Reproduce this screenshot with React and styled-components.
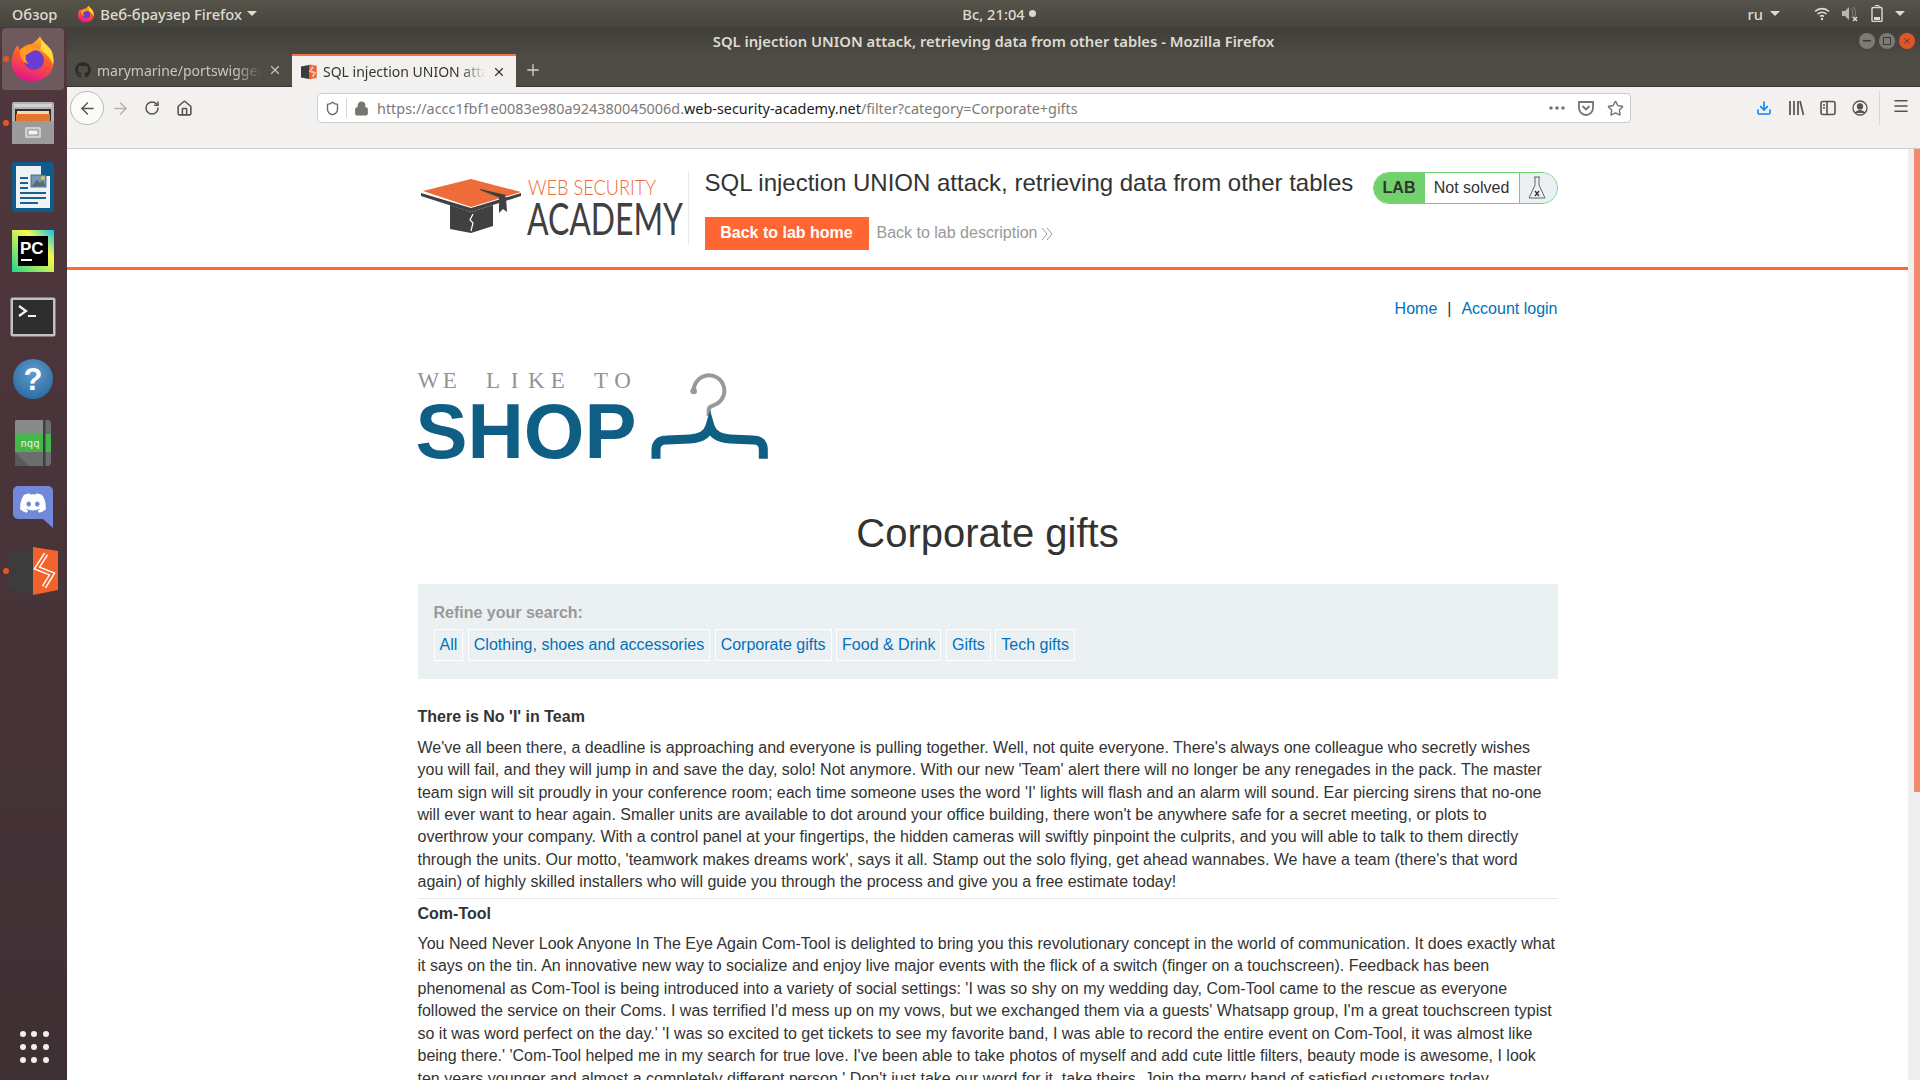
import React from 'react'
import styled, { createGlobalStyle } from 'styled-components'
import { ArrowLeft, ArrowRight, RotateCw, House, Lock, Star, Download, Menu, Plus, X, Shield } from 'lucide-react'
import { FaGithub, FaDiscord } from 'react-icons/fa'

const GlobalStyle = createGlobalStyle`
    html, body {
        margin: 0;
        height: 100%;
        overflow: hidden;
        background: #fff;
    }
    * { box-sizing: border-box; }
`

const Screen = styled.div`
    width: 1920px;
    height: 1080px;
    display: flex;
    flex-direction: column;
    overflow: hidden;
    font-family: 'Liberation Sans', Arial, sans-serif;
`

/* ---- gnome top bar ---- */
const TopBar = styled.div`
    height: 27px;
    flex: none;
    display: grid;
    grid-template-columns: 1fr auto 1fr;
    align-items: center;
    background: linear-gradient(#565349, #46443e);
    color: #dedbd2;
    font-family: 'Noto Sans', sans-serif;
    font-size: 14.7px;
    font-weight: 500;
    padding: 0 12px;
`
const BarGroup = styled.div`
    display: flex;
    align-items: center;
    gap: ${(props) => props.gap || 0}px;
    justify-content: ${(props) => props.end ? 'flex-end' : 'flex-start'};
`
const Caret = styled.span`
    width: 0;
    height: 0;
    border-left: 5px solid transparent;
    border-right: 5px solid transparent;
    border-top: 5px solid #dedbd2;
    margin-left: ${(props) => props.left || 0}px;
    margin-right: ${(props) => props.right || 0}px;
`
const Clock = styled.div`
    display: flex;
    align-items: center;
    gap: 4px;
    margin-left: 78px;
    &::after {
        content: '';
        width: 7px;
        height: 7px;
        border-radius: 50%;
        background: #d8d6d0;
    }
`

const Desktop = styled.div`
    flex: 1;
    min-height: 0;
    display: flex;
`

/* ---- ubuntu dock ---- */
const Dock = styled.div`
    width: 67px;
    flex: none;
    display: flex;
    flex-direction: column;
    background: linear-gradient(#50373d, #3f3034);
`
const DockItem = styled.div`
    position: relative;
    height: 64px;
    display: flex;
    align-items: center;
    justify-content: center;
    padding-right: 1px;
    padding-top: ${(props) => props.lower ? 4 : 0}px;
    &::before {
        content: ${(props) => props.running ? "''" : 'none'};
        position: absolute;
        left: 3px;
        top: 29px;
        width: 6px;
        height: 6px;
        border-radius: 50%;
        background: #e95420;
    }
`
const ActiveTile = styled.div`
    width: 62px;
    height: 62px;
    border-radius: 4px;
    background: #6e5a5e;
    display: flex;
    align-items: center;
    justify-content: center;
`
const AppGrid = styled.div`
    margin-top: auto;
    margin-bottom: 17px;
    align-self: center;
    display: grid;
    grid-template-columns: repeat(3, 5px);
    gap: 7px 6.5px;
    span {
        width: 6px;
        height: 6px;
        border-radius: 50%;
        background: #f2f0ee;
    }
`

/* ---- firefox window ---- */
const Browser = styled.div`
    flex: 1;
    min-width: 0;
    display: flex;
    flex-direction: column;
`
const TitleBar = styled.div`
    height: 27px;
    flex: none;
    position: relative;
    display: flex;
    align-items: center;
    justify-content: center;
    background: linear-gradient(#403e39, #4b4942);
    color: #dedbd2;
    font-family: 'Noto Sans', sans-serif;
    font-size: 14.8px;
    font-weight: 600;
`
const WindowButtons = styled.div`
    position: absolute;
    right: 5px;
    top: 6px;
    display: flex;
    gap: 4px;
`
const WindowButton = styled.div`
    width: 16px;
    height: 16px;
    border-radius: 50%;
    background: ${(props) => props.close ? '#e0562a' : '#7c7a74'};
    display: flex;
    align-items: center;
    justify-content: center;
    color: #3d3b37;
`
const TabStrip = styled.div`
    height: 33px;
    flex: none;
    display: flex;
    align-items: stretch;
    padding-left: 8px;
    background: #4f4c45;
    border-bottom: 1px solid #36352f;
`
const Tab = styled.div`
    width: ${(props) => props.active ? 224 : 217}px;
    display: flex;
    align-items: center;
    gap: 6px;
    padding: 0 10px 0 ${(props) => props.active ? 9 : 0}px;
    margin-bottom: ${(props) => props.active ? -1 : 0}px;
    background: ${(props) => props.active ? '#f2f1ef' : 'transparent'};
    border-top: ${(props) => props.active ? '2px solid #f0734a' : 'none'};
    color: ${(props) => props.active ? '#36352f' : '#c9c6bf'};
    font-family: 'Noto Sans', sans-serif;
    font-size: 14px;
`
const TabLabel = styled.span`
    flex: 1;
    min-width: 0;
    white-space: nowrap;
    overflow: hidden;
    -webkit-mask-image: linear-gradient(to right, #000 84%, transparent);
    mask-image: linear-gradient(to right, #000 84%, transparent);
`
const NewTab = styled.div`
    width: 34px;
    display: flex;
    align-items: center;
    justify-content: center;
    color: #d5d2cb;
`
const Toolbar = styled.div`
    height: 62px;
    flex: none;
    display: flex;
    align-items: flex-start;
    padding: 4px 0 0 3px;
    background: #f2f1ef;
    border-bottom: 1px solid #cfcdca;
    color: #55534f;
`
const BackButton = styled.div`
    width: 34px;
    height: 34px;
    border-radius: 50%;
    background: #fbfbfa;
    border: 1px solid #bdbbb8;
    display: flex;
    align-items: center;
    justify-content: center;
`
const NavButton = styled.div`
    width: 32px;
    height: 34px;
    display: flex;
    align-items: center;
    justify-content: center;
    color: ${(props) => props.dim ? '#b4b2ae' : 'inherit'};
`
const UrlBar = styled.div`
    width: 1314px;
    height: 30px;
    margin: 2px 0 0 117px;
    display: flex;
    align-items: center;
    background: #fff;
    border: 1px solid #cdcbc8;
    border-radius: 4px;
    font-family: 'Noto Sans', sans-serif;
    font-size: 14.4px;
    color: #7c7a76;
`
const UrlShield = styled.div`
    width: 29px;
    height: 20px;
    display: flex;
    align-items: center;
    justify-content: center;
    border-right: 1px solid #d8d6d3;
    margin-right: 7px;
`
const UrlText = styled.div`
    flex: 1;
    margin-left: 8px;
    white-space: nowrap;
    b {
        font-weight: 400;
        color: #1c1b1a;
    }
`
const UrlActions = styled.div`
    display: flex;
    align-items: center;
    gap: 13px;
    padding-right: 6px;
    color: #77756f;
`
const ToolIcons = styled.div`
    display: flex;
    align-items: center;
    height: 34px;
    margin-left: 125px;
    gap: 16px;
`
const ToolDivider = styled.div`
    width: 1px;
    height: 34px;
    background: #d8d6d3;
    margin-left: -5px;
`
const MenuButton = styled.div`
    margin: 6px 0 0 12px;
    display: flex;
`

/* ---- page in the browser ---- */
const Viewport = styled.div`
    flex: 1;
    min-height: 0;
    display: flex;
    background: #fff;
`
const Page = styled.div`
    flex: 1;
    min-width: 0;
    overflow: hidden;
    color: #333332;
    font-size: 16px;
    line-height: 22.4px;
`
const Scrollbar = styled.div`
    width: 12px;
    flex: none;
    display: flex;
    justify-content: flex-end;
    background: #f0efee;
`
const ScrollThumb = styled.div`
    width: 6px;
    height: 643px;
    background: #f2896a;
`
const LabHeader = styled.div`
    height: 121px;
    border-bottom: 3px solid #ff6633;
`
const Container = styled.div`
    width: 1140px;
    margin: 0 auto;
`
const HeaderInner = styled(Container)`
    display: flex;
    align-items: flex-start;
    padding-top: 22px;
`
const LogoBlock = styled.div`
    width: 271px;
    height: 73px;
    flex: none;
    padding: 7px 0 0 2px;
    border-right: 1px solid #e6e8e9;
`
const TitleColumn = styled.div`
    margin: -3px 0 0 16px;
`
const LabTitle = styled.h2`
    margin: 0 0 20px;
    font-size: 24px;
    line-height: 29px;
    font-weight: 400;
    white-space: nowrap;
`
const LabLinks = styled.div`
    display: flex;
    align-items: center;
`
const LabButton = styled.a`
    width: 164px;
    height: 33px;
    display: flex;
    align-items: center;
    justify-content: center;
    background: #ff6633;
    color: #fff;
    font-weight: 700;
`
const LabLink = styled.a`
    display: flex;
    align-items: center;
    gap: 4px;
    margin-left: 8px;
    color: #999;
`
const StatusWidget = styled.div`
    margin: 1px 0 0 auto;
    width: 185px;
    height: 32px;
    display: flex;
    overflow: hidden;
    border: 1px solid #70d16d;
    border-radius: 16px;
    line-height: 30px;
`
const StatusTag = styled.div`
    width: 51px;
    background: #70d16d;
    font-weight: 700;
    text-align: center;
`
const StatusText = styled.div`
    width: 95px;
    text-align: center;
    border-right: 1px solid #70d16d;
`
const StatusIcon = styled.div`
    flex: 1;
    background: #ebf0f2;
    display: flex;
    align-items: center;
    justify-content: center;
    padding-right: 3px;
`
const AccountNav = styled.div`
    display: flex;
    justify-content: flex-end;
    gap: 10px;
    margin-top: 28px;
`
const TextLink = styled.a`
    color: #0071bc;
`
const ShopLogo = styled.div`
    display: flex;
    align-items: flex-start;
    margin-top: 51px;
    gap: 13px;
`
const ShopWords = styled.div`
    color: #0f5f85;
`
const ShopTagline = styled.div`
    display: flex;
    font-family: 'Liberation Serif', serif;
    font-size: 23px;
    line-height: 20px;
    color: #949494;
    white-space: nowrap;
`
const TaglineLetter = styled.span`
    width: 21.6px;
    text-align: center;
    flex: none;
`
const ShopName = styled.div`
    font-size: 78px;
    line-height: 70px;
    font-weight: 700;
    margin: 5px 0 0 -2px;
`
const CategoryTitle = styled.h1`
    margin: 43px 0 27px;
    font-size: 40px;
    line-height: 48px;
    font-weight: 400;
    text-align: center;
`
const FilterPanel = styled.section`
    height: 95px;
    padding: 18px 16px 0;
    background: #ebf0f2;
`
const FilterLabel = styled.div`
    color: #999;
    font-weight: 700;
`
const FilterList = styled.div`
    display: flex;
    gap: 4.5px;
    margin-top: 4px;
`
const FilterLink = styled.a`
    height: 32px;
    padding: 0 5px;
    border: 1px solid #fff;
    color: #0071bc;
    line-height: 30px;
    white-space: nowrap;
`
const ArticleList = styled.div`
    margin-top: 27px;
`
const Article = styled.article`
    & + & {
        margin-top: 4px;
        padding-top: 4px;
        border-top: 1px solid #e6e8e9;
    }
`
const ArticleTitle = styled.h3`
    margin: 0 0 8px;
    font-size: 16px;
    line-height: 22.4px;
    font-weight: 700;
`
const ArticleText = styled.p`
    margin: 0;
`

/* ---- drawn icons ---- */
const Firefox = ({ size }) => (
    <svg width={size} height={size} viewBox="0 0 48 48">
        <defs>
            <linearGradient id={`ff${size}`} x1="0.7" y1="0" x2="0.4" y2="1">
                <stop offset="0" stopColor="#ffbd2b" />
                <stop offset="0.5" stopColor="#ff5a2c" />
                <stop offset="1" stopColor="#e3168c" />
            </linearGradient>
        </defs>
        <path d="M31 1c1 6 9 9 12 16 4 10 1 20-6 25-7 5-18 6-26 1C3 38 1 28 4 19c1-4 3-7 5-9 0 2 1 4 2 5 3-4 8-6 12-6 3-3 7-5 8-8z" fill={`url(#ff${size})`} />
        <path d="M31 1c1 6 9 9 12 16 1 4 2 9 1 13-2-7-7-12-13-15 2-5 1-10 0-14z" fill="#ffdc3a" />
        <circle cx="25" cy="25" r="10" fill="#6a3ccf" />
        <path d="M11 15c3-3 9-5 15-3 4 1 7 3 8 5-4-3-9-2-12 0l-5 3c-1 3 0 7 3 9-6-1-10-7-9-14z" fill="#ff9a22" />
    </svg>
)
const FilesIcon = () => (
    <svg width="44" height="44" viewBox="0 0 44 44">
        <rect x="1" y="1" width="42" height="42" rx="2" fill="#b3b3b3" />
        <rect x="3" y="3" width="38" height="3" fill="#d2d2d2" />
        <rect x="4" y="8" width="36" height="12" fill="#2f2d2b" />
        <rect x="6" y="10" width="32" height="4" fill="#f6d9a8" />
        <rect x="5" y="13" width="34" height="7" fill="#e0762f" />
        <rect x="1" y="20" width="42" height="23" fill="#9b9b9b" />
        <rect x="14" y="26" width="16" height="11" rx="1.5" fill="#cfcfcf" />
        <rect x="17" y="29" width="10" height="5" fill="#f4f4f4" stroke="#555" strokeWidth="0.6" />
    </svg>
)
const WriterIcon = () => (
    <svg width="42" height="50" viewBox="0 0 42 50">
        <path d="M3 0h28l11 11v35a4 4 0 0 1-4 4H4a4 4 0 0 1-4-4V3a3 3 0 0 1 3-3z" fill="#0f5c8c" />
        <path d="M4 4h25v10h9v32H4z" fill="#f0f3f6" />
        <path d="M30 0h9a3 3 0 0 1 3 3v9z" fill="#0f5c8c" />
        <path d="M8 15h8v2H8zM8 20h8v2H8zM8 25h8v2H8zM8 30h26v2H8zM8 35h26v2H8zM8 40h18v2H8z" fill="#1f5f8f" />
        <rect x="19" y="13" width="15" height="12" fill="#7a97b5" stroke="#2c5f87" strokeWidth="0.8" />
        <path d="M20 24l5-6 3 3 3-3 2 6z" fill="#5b6d60" />
        <circle cx="31" cy="16" r="2" fill="#e5c24a" />
    </svg>
)
const PyCharmIcon = () => (
    <svg width="42" height="42" viewBox="0 0 42 42">
        <defs>
            <linearGradient id="pc" x1="0" y1="1" x2="1" y2="0">
                <stop offset="0" stopColor="#21d789" />
                <stop offset="0.65" stopColor="#fcf84a" />
                <stop offset="1" stopColor="#07c3f2" />
            </linearGradient>
        </defs>
        <rect width="42" height="42" fill="url(#pc)" />
        <rect x="6" y="6" width="30" height="30" fill="#000" />
        <text x="8" y="24" fontFamily="Liberation Sans, sans-serif" fontWeight="700" fontSize="17" fill="#fff">PC</text>
        <rect x="9" y="29" width="11" height="2" fill="#fff" />
    </svg>
)
const TerminalIcon = () => (
    <svg width="46" height="40" viewBox="0 0 46 40">
        <rect x="0.5" y="0.5" width="45" height="39" rx="2" fill="#c2c2c0" />
        <rect x="3" y="3" width="40" height="34" fill="#2e2e2e" />
        <path d="M9 9l7 5-7 5" fill="none" stroke="#f2f2f2" strokeWidth="2.2" />
        <rect x="18" y="18" width="8" height="2" fill="#f2f2f2" />
    </svg>
)
const HelpIcon = () => (
    <svg width="40" height="40" viewBox="0 0 40 40">
        <defs>
            <radialGradient id="hp" cx="0.5" cy="0.35" r="0.7">
                <stop offset="0" stopColor="#5e9ccd" />
                <stop offset="1" stopColor="#2a6a9f" />
            </radialGradient>
        </defs>
        <circle cx="20" cy="20" r="20" fill="url(#hp)" />
        <text x="20" y="31" textAnchor="middle" fontFamily="Liberation Sans, sans-serif" fontWeight="700" fontSize="31" fill="#fff">?</text>
    </svg>
)
const NotepadIcon = () => (
    <svg width="36" height="46" viewBox="0 0 36 46">
        <path d="M0 2a2 2 0 0 1 2-2h30a4 4 0 0 1 4 4v38a4 4 0 0 1-4 4H2a2 2 0 0 1-2-2z" fill="#6d6d6d" />
        <path d="M0 2a2 2 0 0 1 2-2h26v14H0z" fill="#8a8a8a" />
        <rect y="14" width="36" height="18" fill="#45b649" />
        <path d="M0 32l14 14H2a2 2 0 0 1-2-2z" fill="#5a5a5a" />
        <rect x="28" width="2.5" height="46" fill="#3f3f3f" />
        <text x="5.5" y="27" fontFamily="DejaVu Sans Mono, monospace" fontSize="10.5" fill="#e8f5e8">nqq</text>
    </svg>
)
const DiscordIcon = () => (
    <svg width="40" height="42" viewBox="0 0 40 42">
        <path d="M5 0h30a5 5 0 0 1 5 5v37l-10-9H5a5 5 0 0 1-5-5V5a5 5 0 0 1 5-5z" fill="#7289da" />
        <foreignObject x="6" y="3" width="28" height="28">
            <FaDiscord size={28} color="#fff" />
        </foreignObject>
    </svg>
)
const BurpIcon = ({ width, height }) => (
    <svg width={width} height={height} viewBox="0 0 52 48">
        <path d="M0 6l26-5v46L0 42z" fill="#3c3c3c" />
        <path d="M26 0l25 4v39l-25 5z" fill="#f4622b" />
        <path d="M39 7l-9 14 15 6-8 13" fill="none" stroke="#fff" strokeWidth="5" />
        <path d="M39 7l-9 14 15 6-8 13" fill="none" stroke="#f4622b" strokeWidth="2" />
    </svg>
)
const CapLogo = () => (
    <svg width="266" height="60" viewBox="0 0 266 60">
        <path d="M3 13L51 1l50 13-50 15z" fill="#ee6b3a" />
        <path d="M1 15l50 15 50-15v3L51 34 1 18z" fill="#404040" />
        <path d="M30 27l21 7 22-7v21l-22 7-21-4z" fill="#404040" />
        <path d="M53 36l-3 6 3 3-2 8" fill="none" stroke="#fff" strokeWidth="1.2" />
        <path d="M60 11l26 6-3 4-23-9z" fill="#404040" />
        <path d="M79 19h7l1 15-4-3-4 4z" fill="#404040" />
        <text x="108" y="16.5" textLength="128" lengthAdjust="spacingAndGlyphs" fontFamily="Lato, sans-serif" fontWeight="300" fontSize="22" fill="#ee6b3a">WEB SECURITY</text>
        <text x="107" y="57" textLength="156" lengthAdjust="spacingAndGlyphs" fontFamily="Lato, sans-serif" fontWeight="400" fontSize="44" fill="#404040">ACADEMY</text>
    </svg>
)
const Hanger = () => (
    <svg width="120" height="90" viewBox="750 65 360 270">
        <path d="M881 125a46 46 0 1 1 62 42c-12 5-17 7-17 14v20" fill="none" stroke="#999" strokeWidth="12" />
        <circle cx="881" cy="125" r="10" fill="#999" />
        <path d="M768 328v-26q0-30 32-30l70-3q50-3 60-38 10 35 60 38l70 3q30 0 30 30v26" fill="none" stroke="#0f5f85" strokeWidth="27" />
    </svg>
)
const Flask = () => (
    <svg width="18" height="24" viewBox="0 0 18 24" fill="none" stroke="#666" strokeWidth="1">
        <path d="M6 1h6M7 1v8L1 22h16L11 9V1" />
        <path d="M7 15l4 5M11 15l-4 5" stroke="#333" strokeWidth="1.3" />
    </svg>
)
const Chevrons = () => (
    <svg width="12" height="12" viewBox="0 0 12 12" fill="none" stroke="#999" strokeWidth="1">
        <path d="M1 0l5 6-5 6M6 0l5 6-5 6" />
    </svg>
)
const Wifi = () => (
    <svg width="16" height="14" viewBox="0 0 16 14" fill="none" stroke="#dedbd2" strokeWidth="1.6">
        <path d="M1 4.5a10 10 0 0 1 14 0M3.5 7a6.5 6.5 0 0 1 9 0" />
        <path d="M6 9.5a3 3 0 0 1 4 0" />
        <circle cx="8" cy="12" r="1.2" fill="#dedbd2" stroke="none" />
    </svg>
)
const Speaker = () => (
    <svg width="18" height="16" viewBox="0 0 18 16" fill="none">
        <path d="M1 5h3l4-4v13l-4-4H1z" fill="#b9b6ae" />
        <path d="M10 3a6 6 0 0 1 0 9M12 1a8 8 0 0 1 1 11" stroke="#77756e" strokeWidth="1.2" />
        <path d="M12 11l4 4M16 11l-4 4" stroke="#dedbd2" strokeWidth="1.5" />
    </svg>
)
const Battery = () => (
    <svg width="12" height="17" viewBox="0 0 12 17" fill="none">
        <path d="M4 .5h4v2" stroke="#dedbd2" />
        <rect x="1" y="2.5" width="10" height="14" rx="1" stroke="#dedbd2" strokeWidth="1.4" />
        <rect x="3" y="12" width="6" height="3" fill="#dedbd2" />
    </svg>
)
const Pocket = () => (
    <svg width="16" height="16" viewBox="0 0 16 16" fill="none" stroke="#77756f" strokeWidth="1.8">
        <path d="M1 2h14v6a7 7 0 0 1-14 0z" />
        <path d="M4.5 6L8 9.5 11.5 6" />
    </svg>
)
const Library = () => (
    <svg width="16" height="16" viewBox="0 0 16 16" fill="none" stroke="#55534f" strokeWidth="1.7">
        <path d="M2 1v14M6 1v14M10 1v14M12 1l3.5 14" />
    </svg>
)
const SidebarIcon = () => (
    <svg width="16" height="16" viewBox="0 0 16 16" fill="none" stroke="#55534f" strokeWidth="1.6">
        <rect x="1" y="1.5" width="14" height="13" rx="2" />
        <path d="M7 1.5v13" />
        <path d="M3 5h2M3 8h2" />
    </svg>
)
const Account = () => (
    <svg width="16" height="16" viewBox="0 0 16 16" fill="none" stroke="#55534f" strokeWidth="1.3">
        <circle cx="8" cy="8" r="7" />
        <circle cx="8" cy="6.5" r="2.5" fill="#55534f" />
        <path d="M3.5 13a5 4 0 0 1 9 0" fill="#55534f" />
    </svg>
)

const categories = ['All', 'Clothing, shoes and accessories', 'Corporate gifts', 'Food & Drink', 'Gifts', 'Tech gifts']

const articles = [
    {
        title: "There is No 'I' in Team",
        text: "We've all been there, a deadline is approaching and everyone is pulling together. Well, not quite everyone. There's always one colleague who secretly wishes you will fail, and they will jump in and save the day, solo! Not anymore. With our new 'Team' alert there will no longer be any renegades in the pack. The master team sign will sit proudly in your conference room; each time someone uses the word 'I' lights will flash and an alarm will sound. Ear piercing sirens that no-one will ever want to hear again. Smaller units are available to dot around your office building, there won't be anywhere safe for a secret meeting, or plots to overthrow your company. With a control panel at your fingertips, the hidden cameras will swiftly pinpoint the culprits, and you will able to talk to them directly through the units. Our motto, 'teamwork makes dreams work', says it all. Stamp out the solo flying, get ahead wannabes. We have a team (there's that word again) of highly skilled installers who will guide you through the process and give you a free estimate today!",
    },
    {
        title: 'Com-Tool',
        text: "You Need Never Look Anyone In The Eye Again Com-Tool is delighted to bring you this revolutionary concept in the world of communication. It does exactly what it says on the tin. An innovative new way to socialize and enjoy live major events with the flick of a switch (finger on a touchscreen). Feedback has been phenomenal as Com-Tool is being introduced into a variety of social settings: 'I was so shy on my wedding day, Com-Tool came to the rescue as everyone followed the service on their Coms. I was terrified I'd mess up on my vows, but we exchanged them via a guests' Whatsapp group, I'm a great touchscreen typist so it was word perfect on the day.' 'I was so excited to get tickets to see my favorite band, I was able to record the entire event on Com-Tool, it was almost like being there.' 'Com-Tool helped me in my search for true love. I've been able to take photos of myself and add cute little filters, beauty mode is awesome, I look ten years younger and almost a completely different person.' Don't just take our word for it, take theirs. Join the merry band of satisfied customers today.",
    },
]

const App = () => {
    return (
        <Screen>
            <GlobalStyle />
            <TopBar>
                <BarGroup>
                    <span>Обзор</span>
                    <span style={{ width: 20 }} />
                    <Firefox size={18} />
                    <span style={{ width: 5 }} />
                    <span>Веб-браузер Firefox</span>
                    <Caret left={5} />
                </BarGroup>
                <Clock>Вс, 21:04</Clock>
                <BarGroup end="true">
                    <span>ru</span>
                    <Caret left={7} right={34} />
                    <Wifi />
                    <span style={{ width: 11 }} />
                    <Speaker />
                    <span style={{ width: 12 }} />
                    <Battery />
                    <Caret left={12} right={3} />
                </BarGroup>
            </TopBar>
            <Desktop>
                <Dock>
                    <DockItem running>
                        <ActiveTile><Firefox size={48} /></ActiveTile>
                    </DockItem>
                    <DockItem running><FilesIcon /></DockItem>
                    <DockItem><WriterIcon /></DockItem>
                    <DockItem><PyCharmIcon /></DockItem>
                    <DockItem lower="true"><TerminalIcon /></DockItem>
                    <DockItem><HelpIcon /></DockItem>
                    <DockItem><NotepadIcon /></DockItem>
                    <DockItem><DiscordIcon /></DockItem>
                    <DockItem running><BurpIcon width={52} height={48} /></DockItem>
                    <AppGrid>
                        {Array.from({ length: 9 }).map((_, i) => <span key={i} />)}
                    </AppGrid>
                </Dock>
                <Browser>
                    <TitleBar>
                        SQL injection UNION attack, retrieving data from other tables - Mozilla Firefox
                        <WindowButtons>
                            <WindowButton><svg width="8" height="2"><rect width="8" height="1.5" fill="#3d3b37" /></svg></WindowButton>
                            <WindowButton><svg width="8" height="8"><rect x="0.5" y="0.5" width="7" height="7" fill="none" stroke="#3d3b37" /></svg></WindowButton>
                            <WindowButton close="true"><X size={10} strokeWidth={2} /></WindowButton>
                        </WindowButtons>
                    </TitleBar>
                    <TabStrip>
                        <Tab>
                            <FaGithub size={16} color="#2b2a27" />
                            <TabLabel>marymarine/portswigger</TabLabel>
                            <X size={14} strokeWidth={2} />
                        </Tab>
                        <Tab active>
                            <BurpIcon width={16} height={16} />
                            <TabLabel>SQL injection UNION attack</TabLabel>
                            <X size={14} strokeWidth={2} />
                        </Tab>
                        <NewTab><Plus size={18} strokeWidth={1.8} /></NewTab>
                    </TabStrip>
                    <Toolbar>
                        <BackButton><ArrowLeft size={19} strokeWidth={1.8} /></BackButton>
                        <NavButton dim="true"><ArrowRight size={19} strokeWidth={1.8} /></NavButton>
                        <NavButton><RotateCw size={16} strokeWidth={2.2} /></NavButton>
                        <NavButton><House size={17} strokeWidth={2.2} /></NavButton>
                        <UrlBar>
                            <UrlShield><Shield size={15} strokeWidth={2.2} color="#6b6965" /></UrlShield>
                            <Lock size={15} strokeWidth={2.4} color="#77756f" fill="#77756f" />
                            <UrlText>https://accc1fbf1e0083e980a924380045006d.<b>web-security-academy.net</b>/filter?category=Corporate+gifts</UrlText>
                            <UrlActions>
                                <svg width="16" height="4"><circle cx="2" cy="2" r="1.8" fill="#77756f" /><circle cx="8" cy="2" r="1.8" fill="#77756f" /><circle cx="14" cy="2" r="1.8" fill="#77756f" /></svg>
                                <Pocket />
                                <Star size={17} strokeWidth={2} />
                            </UrlActions>
                        </UrlBar>
                        <ToolIcons>
                            <Download size={16} strokeWidth={2.4} color="#0a84ff" />
                            <Library />
                            <SidebarIcon />
                            <Account />
                            <ToolDivider />
                        </ToolIcons>
                        <MenuButton><Menu size={18} strokeWidth={2} /></MenuButton>
                    </Toolbar>
                    <Viewport>
                        <Page>
                            <LabHeader>
                                <HeaderInner>
                                    <LogoBlock><CapLogo /></LogoBlock>
                                    <TitleColumn>
                                        <LabTitle>SQL injection UNION attack, retrieving data from other tables</LabTitle>
                                        <LabLinks>
                                            <LabButton>Back to lab home</LabButton>
                                            <LabLink>Back to lab description <Chevrons /></LabLink>
                                        </LabLinks>
                                    </TitleColumn>
                                    <StatusWidget>
                                        <StatusTag>LAB</StatusTag>
                                        <StatusText>Not solved</StatusText>
                                        <StatusIcon><Flask /></StatusIcon>
                                    </StatusWidget>
                                </HeaderInner>
                            </LabHeader>
                            <Container>
                                <AccountNav>
                                    <TextLink>Home</TextLink>
                                    <span>|</span>
                                    <TextLink>Account login</TextLink>
                                </AccountNav>
                                <ShopLogo>
                                    <ShopWords>
                                        <ShopTagline>
                                            {'WE LIKE TO'.split('').map((c, i) => <TaglineLetter key={i}>{c === ' ' ? '\u00a0' : c}</TaglineLetter>)}
                                        </ShopTagline>
                                        <ShopName>SHOP</ShopName>
                                    </ShopWords>
                                    <Hanger />
                                </ShopLogo>
                                <CategoryTitle>Corporate gifts</CategoryTitle>
                                <FilterPanel>
                                    <FilterLabel>Refine your search:</FilterLabel>
                                    <FilterList>
                                        {categories.map((c) => <FilterLink key={c}>{c}</FilterLink>)}
                                    </FilterList>
                                </FilterPanel>
                                <ArticleList>
                                    {articles.map((a) => (
                                        <Article key={a.title}>
                                            <ArticleTitle>{a.title}</ArticleTitle>
                                            <ArticleText>{a.text}</ArticleText>
                                        </Article>
                                    ))}
                                </ArticleList>
                            </Container>
                        </Page>
                        <Scrollbar><ScrollThumb /></Scrollbar>
                    </Viewport>
                </Browser>
            </Desktop>
        </Screen>
    )
}

export default App
